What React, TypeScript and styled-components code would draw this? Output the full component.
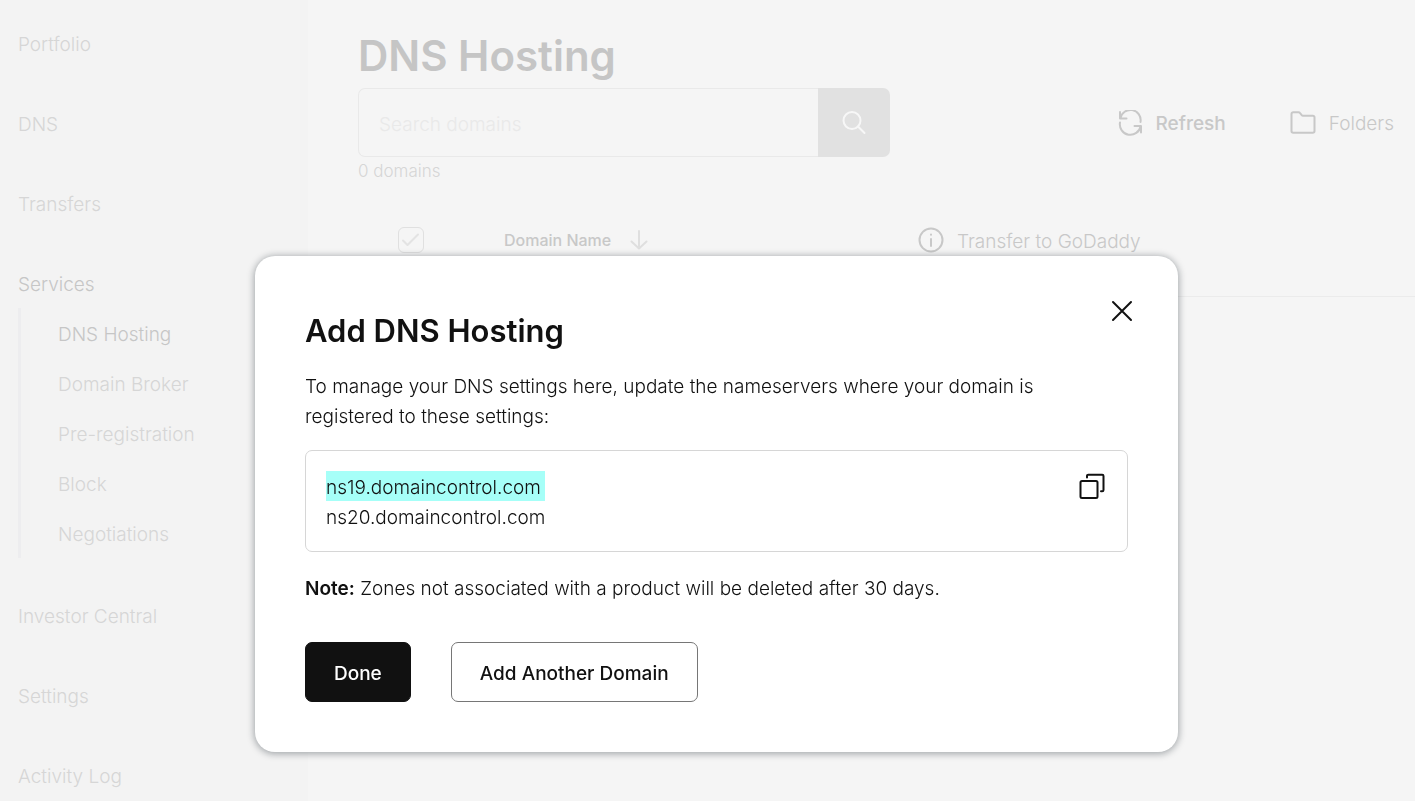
import React from "react";
import styled, { createGlobalStyle } from "styled-components";

const GlobalStyle = createGlobalStyle`
  *, *::before, *::after { box-sizing: border-box; }
  body {
    margin: 0;
    background: #f5f5f5;
    color: #111111;
    font-family: Inter, "Liberation Sans", sans-serif;
    font-size: 19px;
    font-weight: 300;
    line-height: 30px;
  }
  button, input { font: inherit; color: inherit; }
`;

const Page = styled.div`
  display: flex;
  min-height: 100vh;
`;

const Sidebar = styled.nav`
  flex: 0 0 308px;
  padding: 18px 18px 0;
  background: #f3f3f3;
`;

const NavList = styled.ul`
  display: flex;
  flex-direction: column;
  gap: 30px;
  margin: 0;
  padding: 0;
  list-style: none;
`;

const SubList = styled.ul`
  margin: 0 0 2px;
  padding: 0 0 0 37px;
  list-style: none;
  border-left: 3px solid #ededef;
`;

const NavLink = styled.a<{ $current?: boolean }>`
  display: block;
  padding-top: 4px;
  line-height: 46px;
  color: ${(p) => (p.$current ? "#c6c6c6" : "#d6d6d6")};
  text-decoration: none;
`;

const Main = styled.main`
  flex: 1;
  min-width: 0;
  padding: 24px 0 0 50px;
`;

const PageTitle = styled.h1`
  margin: 0;
  font-size: 42px;
  font-weight: 600;
  line-height: 64px;
  color: #c5c5c5;
`;

const Toolbar = styled.div`
  display: flex;
  align-items: center;
  justify-content: space-between;
  padding-right: 21px;
`;

const SearchForm = styled.form`
  display: flex;
  flex: 0 1 532px;
  height: 69px;
`;

const SearchInput = styled.input`
  flex: 1;
  min-width: 0;
  padding: 4px 20px 0;
  border: 1px solid #e9e9e9;
  border-right: 0;
  border-radius: 7px 0 0 7px;
  background: transparent;
  outline: none;
  &::placeholder { color: #e9e9e9; opacity: 1; }
`;

const SearchButton = styled.button`
  display: grid;
  place-items: center;
  width: 72px;
  padding: 0;
  border: 0;
  border-radius: 0 7px 7px 0;
  background: #e1e1e1;
  color: #f7f7f7;
`;

const Actions = styled.div`
  display: flex;
  gap: 64px;
`;

const PlainButton = styled.button<{ $strong?: boolean }>`
  display: flex;
  align-items: center;
  gap: 13px;
  padding: 0;
  border: 0;
  background: none;
  color: #c8c8c8;
  font-weight: ${(p) => (p.$strong ? 500 : 300)};
`;

const ButtonLabel = styled.span`
  padding-top: 3px;
`;

const Count = styled.p`
  margin: 0;
  font-size: 17px;
  line-height: 28px;
  color: #d6d6d6;
`;

const DomainTable = styled.table`
  width: 100%;
  border-collapse: collapse;
`;

const HeadCell = styled.th<{ $width?: number }>`
  width: ${(p) => (p.$width ? `${p.$width}px` : "auto")};
  height: 111px;
  padding: 0;
  border-bottom: 1px solid #ebebeb;
  text-align: left;
  font-weight: 300;
`;

const SortButton = styled(PlainButton)`
  gap: 18px;
  font-size: 16px;
  font-weight: 500;
  color: #c8c8c8;
  & > svg { color: #dfdfdf; }
`;

const CheckLabel = styled.label`
  display: grid;
  width: 26px;
  height: 26px;
  margin-left: 40px;
  place-items: center;
  color: #e3e3e3;
  & > * { grid-area: 1 / 1; }
`;

const CheckInput = styled.input`
  appearance: none;
  width: 26px;
  height: 26px;
  margin: 0;
  border: 1px solid #e0e0e0;
  border-radius: 6px;
`;

const Overlay = styled.div`
  position: fixed;
  inset: 0;
  display: flex;
  align-items: flex-start;
  justify-content: center;
  padding: 256px 0 0 18px;
`;

const Dialog = styled.section`
  position: relative;
  width: 923px;
  max-width: 100%;
  padding: 50px;
  border-radius: 20px;
  background: #ffffff;
  box-shadow: 0 1px 7px 1px rgba(20, 30, 40, 0.36);
`;

const DialogTitle = styled.h2`
  margin: 0 0 15px;
  font-size: 31px;
  font-weight: 600;
  line-height: 50px;
`;

const CloseButton = styled.button`
  position: absolute;
  top: 39px;
  right: 40px;
  display: grid;
  place-items: center;
  width: 32px;
  height: 32px;
  padding: 0;
  border: 0;
  background: none;
`;

const Text = styled.p`
  margin: 0;
  padding-top: 1px;
  max-width: 780px;
`;

const ServerBox = styled.div`
  display: flex;
  align-items: flex-start;
  justify-content: space-between;
  margin: 18px 0 21px;
  padding: 20px;
  border: 1px solid #d6d6d6;
  border-radius: 7px;
`;

const ServerList = styled.ul`
  margin: 0;
  padding: 0;
  list-style: none;
`;

const Server = styled.li`
  padding-top: 4px;
  line-height: 26px;
`;

const Highlight = styled.mark`
  display: block;
  margin-top: -4px;
  padding-top: 4px;
  background: #a6fff8;
  color: inherit;
`;

const CopyButton = styled.button`
  display: grid;
  place-items: center;
  width: 30px;
  height: 30px;
  padding: 0;
  border: 0;
  background: none;
`;

const Strong = styled.strong`
  font-weight: 600;
`;

const ButtonRow = styled.div`
  display: flex;
  gap: 40px;
  margin-top: 38px;
`;

const ActionButton = styled.button<{ $primary?: boolean }>`
  height: 60px;
  padding: 4px 28px 0;
  border: 1px solid ${(p) => (p.$primary ? "#111111" : "#767676")};
  border-radius: 7px;
  background: ${(p) => (p.$primary ? "#111111" : "#ffffff")};
  color: ${(p) => (p.$primary ? "#ffffff" : "#111111")};
  font-weight: 500;
`;

type IconProps = { size?: number; stroke?: number; children: React.ReactNode };

const Icon = ({ size = 26, stroke = 2, children }: IconProps) => (
  <svg
    width={size}
    height={size}
    viewBox={`0 0 ${size} ${size}`}
    fill="none"
    stroke="currentColor"
    strokeWidth={stroke}
    strokeLinecap="round"
    strokeLinejoin="round"
    aria-hidden="true"
  >
    {children}
  </svg>
);

const services = ["DNS Hosting", "Domain Broker", "Pre-registration", "Block", "Negotiations"];

const NavItem = ({ label }: { label: string }) => (
  <li>
    <NavLink href="#">{label}</NavLink>
  </li>
);

export default function App() {
  return (
    <>
      <GlobalStyle />
      <Page>
        <Sidebar aria-label="Domains">
          <NavList>
            <NavItem label="Portfolio" />
            <NavItem label="DNS" />
            <NavItem label="Transfers" />
            <li>
              <NavLink href="#" $current>Services</NavLink>
              <SubList>
                {services.map((name, i) => (
                  <li key={name}>
                    <NavLink href="#" $current={i === 0}>{name}</NavLink>
                  </li>
                ))}
              </SubList>
            </li>
            <NavItem label="Investor Central" />
            <NavItem label="Settings" />
            <NavItem label="Activity Log" />
          </NavList>
        </Sidebar>

        <Main>
          <PageTitle>DNS Hosting</PageTitle>
          <Toolbar>
            <SearchForm>
              <SearchInput type="text" placeholder="Search domains" aria-label="Search domains" />
              <SearchButton type="button" aria-label="Search">
                <Icon>
                  <circle cx="11" cy="10.500" r="8.500" />
                  <path d="M17 16.500l6.500 6.500" />
                </Icon>
              </SearchButton>
            </SearchForm>
            <Actions>
              <PlainButton type="button" $strong>
                <Icon>
                  <path d="M3 2v6.500h6.500M3.400 8.300A10 10 0 0 1 23.500 12M24 22.500v-6.500h-6.500M23.600 16.200A10 10 0 0 1 3 12.500" />
                </Icon>
                <ButtonLabel>Refresh</ButtonLabel>
              </PlainButton>
              <PlainButton type="button">
                <Icon>
                  <path d="M1.500 4A1.700 1.700 0 0 1 3.200 2.300h5.300q1 0 1.600.8l1.600 2q.5.600 1.300.6h9.800a1.700 1.700 0 0 1 1.700 1.700v13.600a1.700 1.700 0 0 1-1.700 1.700H3.200a1.700 1.700 0 0 1-1.700-1.700z" />
                </Icon>
                <ButtonLabel>Folders</ButtonLabel>
              </PlainButton>
            </Actions>
          </Toolbar>
          <Count>0 domains</Count>
          <DomainTable>
            <thead>
              <tr>
                <HeadCell scope="col" $width={146}>
                  <CheckLabel aria-label="Select all domains">
                    <CheckInput type="checkbox" />
                    <Icon>
                      <path d="M5 13.500l4.500 4.500L20 7.500" />
                    </Icon>
                  </CheckLabel>
                </HeadCell>
                <HeadCell scope="col" $width={414}>
                  <SortButton type="button">
                    Domain Name
                    <Icon size={20}>
                      <path d="M10 1v17.500M2.500 11.500l7.500 7 7.500-7" />
                    </Icon>
                  </SortButton>
                </HeadCell>
                <HeadCell scope="col">
                  <PlainButton type="button">
                    <Icon>
                      <circle cx="13" cy="13" r="11.500" />
                      <path d="M13 12v7" />
                      <path d="M13 7.500v.2" />
                    </Icon>
                    <ButtonLabel>Transfer to GoDaddy</ButtonLabel>
                  </PlainButton>
                </HeadCell>
              </tr>
            </thead>
          </DomainTable>
        </Main>
      </Page>

      <Overlay>
        <Dialog role="dialog" aria-modal="true" aria-labelledby="dialog-title">
          <DialogTitle id="dialog-title">Add DNS Hosting</DialogTitle>
          <CloseButton type="button" aria-label="Close">
            <Icon size={22}>
              <path d="M2 2l18 18M20 2L2 20" />
            </Icon>
          </CloseButton>
          <Text>
            To manage your DNS settings here, update the nameservers where your domain is registered
            to these settings:
          </Text>
          <ServerBox>
            <ServerList>
              <Server><Highlight>ns19.domaincontrol.com</Highlight></Server>
              <Server>ns20.domaincontrol.com</Server>
            </ServerList>
            <CopyButton type="button" aria-label="Copy nameservers">
              <Icon>
                <rect x="1.500" y="8" width="17" height="17" rx="1.500" />
                <path d="M8 4.500V3a1.300 1.300 0 0 1 1.300-1.300H23.200A1.300 1.300 0 0 1 24.500 3v14a1.300 1.300 0 0 1-1.300 1.300H22" />
              </Icon>
            </CopyButton>
          </ServerBox>
          <Text>
            <Strong>Note:</Strong> Zones not associated with a product will be deleted after 30 days.
          </Text>
          <ButtonRow>
            <ActionButton type="button" $primary>Done</ActionButton>
            <ActionButton type="button">Add Another Domain</ActionButton>
          </ButtonRow>
        </Dialog>
      </Overlay>
    </>
  );
}
